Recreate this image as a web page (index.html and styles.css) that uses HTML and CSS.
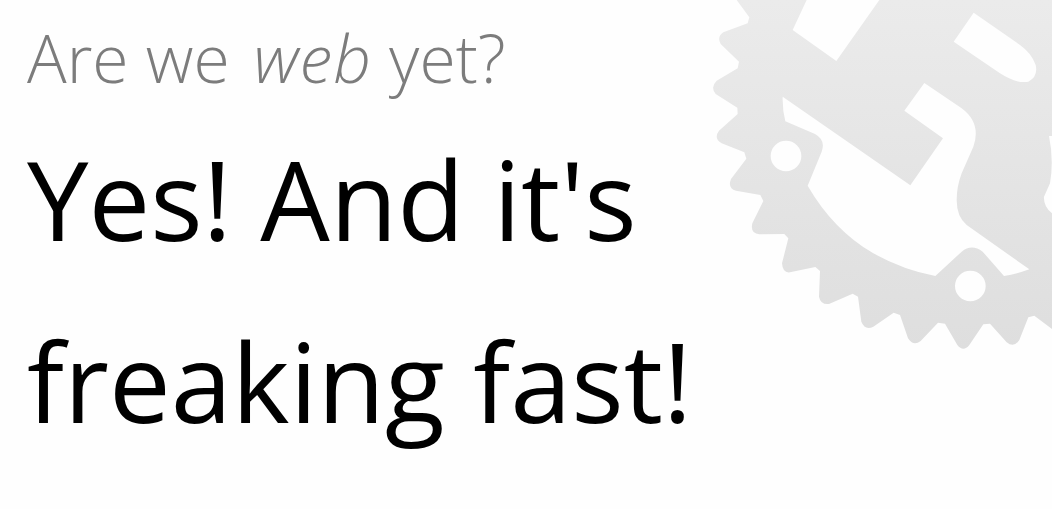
FILE: index.html
```html
<!DOCTYPE html>
<html lang="en">
<head>
<meta charset="utf-8">
<title>Are we web yet?</title>
<link rel="stylesheet" href="styles.css">
</head>
<body>
<svg class="gear" viewBox="0 0 1056 1080" aria-hidden="true">
  <defs>
    <linearGradient id="gearFill" x1="0" y1="0" x2="0" y2="1">
      <stop offset="0" stop-color="#ebebeb"/>
      <stop offset="1" stop-color="#dedede"/>
    </linearGradient>
  </defs>
  <path fill="url(#gearFill)" fill-rule="evenodd" d="M110 0L148 52L143 70L70 97Q50 110 62 132L117 185L113 205L50 242Q30 262 47 282L112 323L113 342L57 392Q40 415 65 430L133 457L139 476L93 537Q82 565 108 572L181 585L190 603L157 670Q150 700 178 703L253 702L265 715L246 790Q248 820 270 817L346 801L360 813L357 890Q362 915 387 912L458 881L474 890L484 965Q495 992 520 980L581 938L600 945L624 1015Q640 1040 662 1023L714 968L735 971L772 1035Q790 1058 808 1035L850 973L870 971L920 1027Q942 1045 958 1020L985 952L1003 947L1056 987V0Z
  M320 0L278 90L409 183L538 0Z
  M821 38L761 125L900 220Q950 252 985 245Q1015 230 1007 195Q995 160 960 135Z
  M248 290Q247 330 256 364L345 402Q378 420 365 455L323 557Q400 690 520 760Q610 810 706 828L785 755Q815 730 848 755L912 828Q950 822 988 808L800 675Q770 650 770 600Q770 560 785 520L820 440Q845 370 785 325L673 249L613 332L729 415L631 556Z
  M1047 408H1056V640Q1030 620 1032 590L1050 550Q1062 480 1047 408Z
  M212 468A46 46 0 1 0 304 468A46 46 0 1 0 212 468Z
  M765 858A46 46 0 1 0 857 858A46 46 0 1 0 765 858Z"/>
</svg>
<main class="hero">
  <h2 class="sub">Are we <em class="sub-em">web</em> yet?</h2>
  <h1 class="title">Yes! And it's freaking fast!</h1>
</main>
</body>
</html>
```
FILE: styles.css
```css
html, body { margin: 0; height: 100%; }
body { background: #fefefe; overflow: hidden; position: relative; font-family: "Open Sans", "Noto Sans", sans-serif; }
.gear { position: absolute; left: 700px; top: 0; width: 352px; height: 360px; }
.hero { position: relative; width: 760px; padding: 19px 0 0 27px; }
.sub { margin: 0; font-size: 66px; font-weight: 300; line-height: 76px; color: #7c7c7c; }
.sub-em { margin-left: 7px; letter-spacing: 1px; }
.title { margin: 0; padding-top: 12px; font-size: 110px; font-weight: 400; line-height: 182px; color: #000; }
```
